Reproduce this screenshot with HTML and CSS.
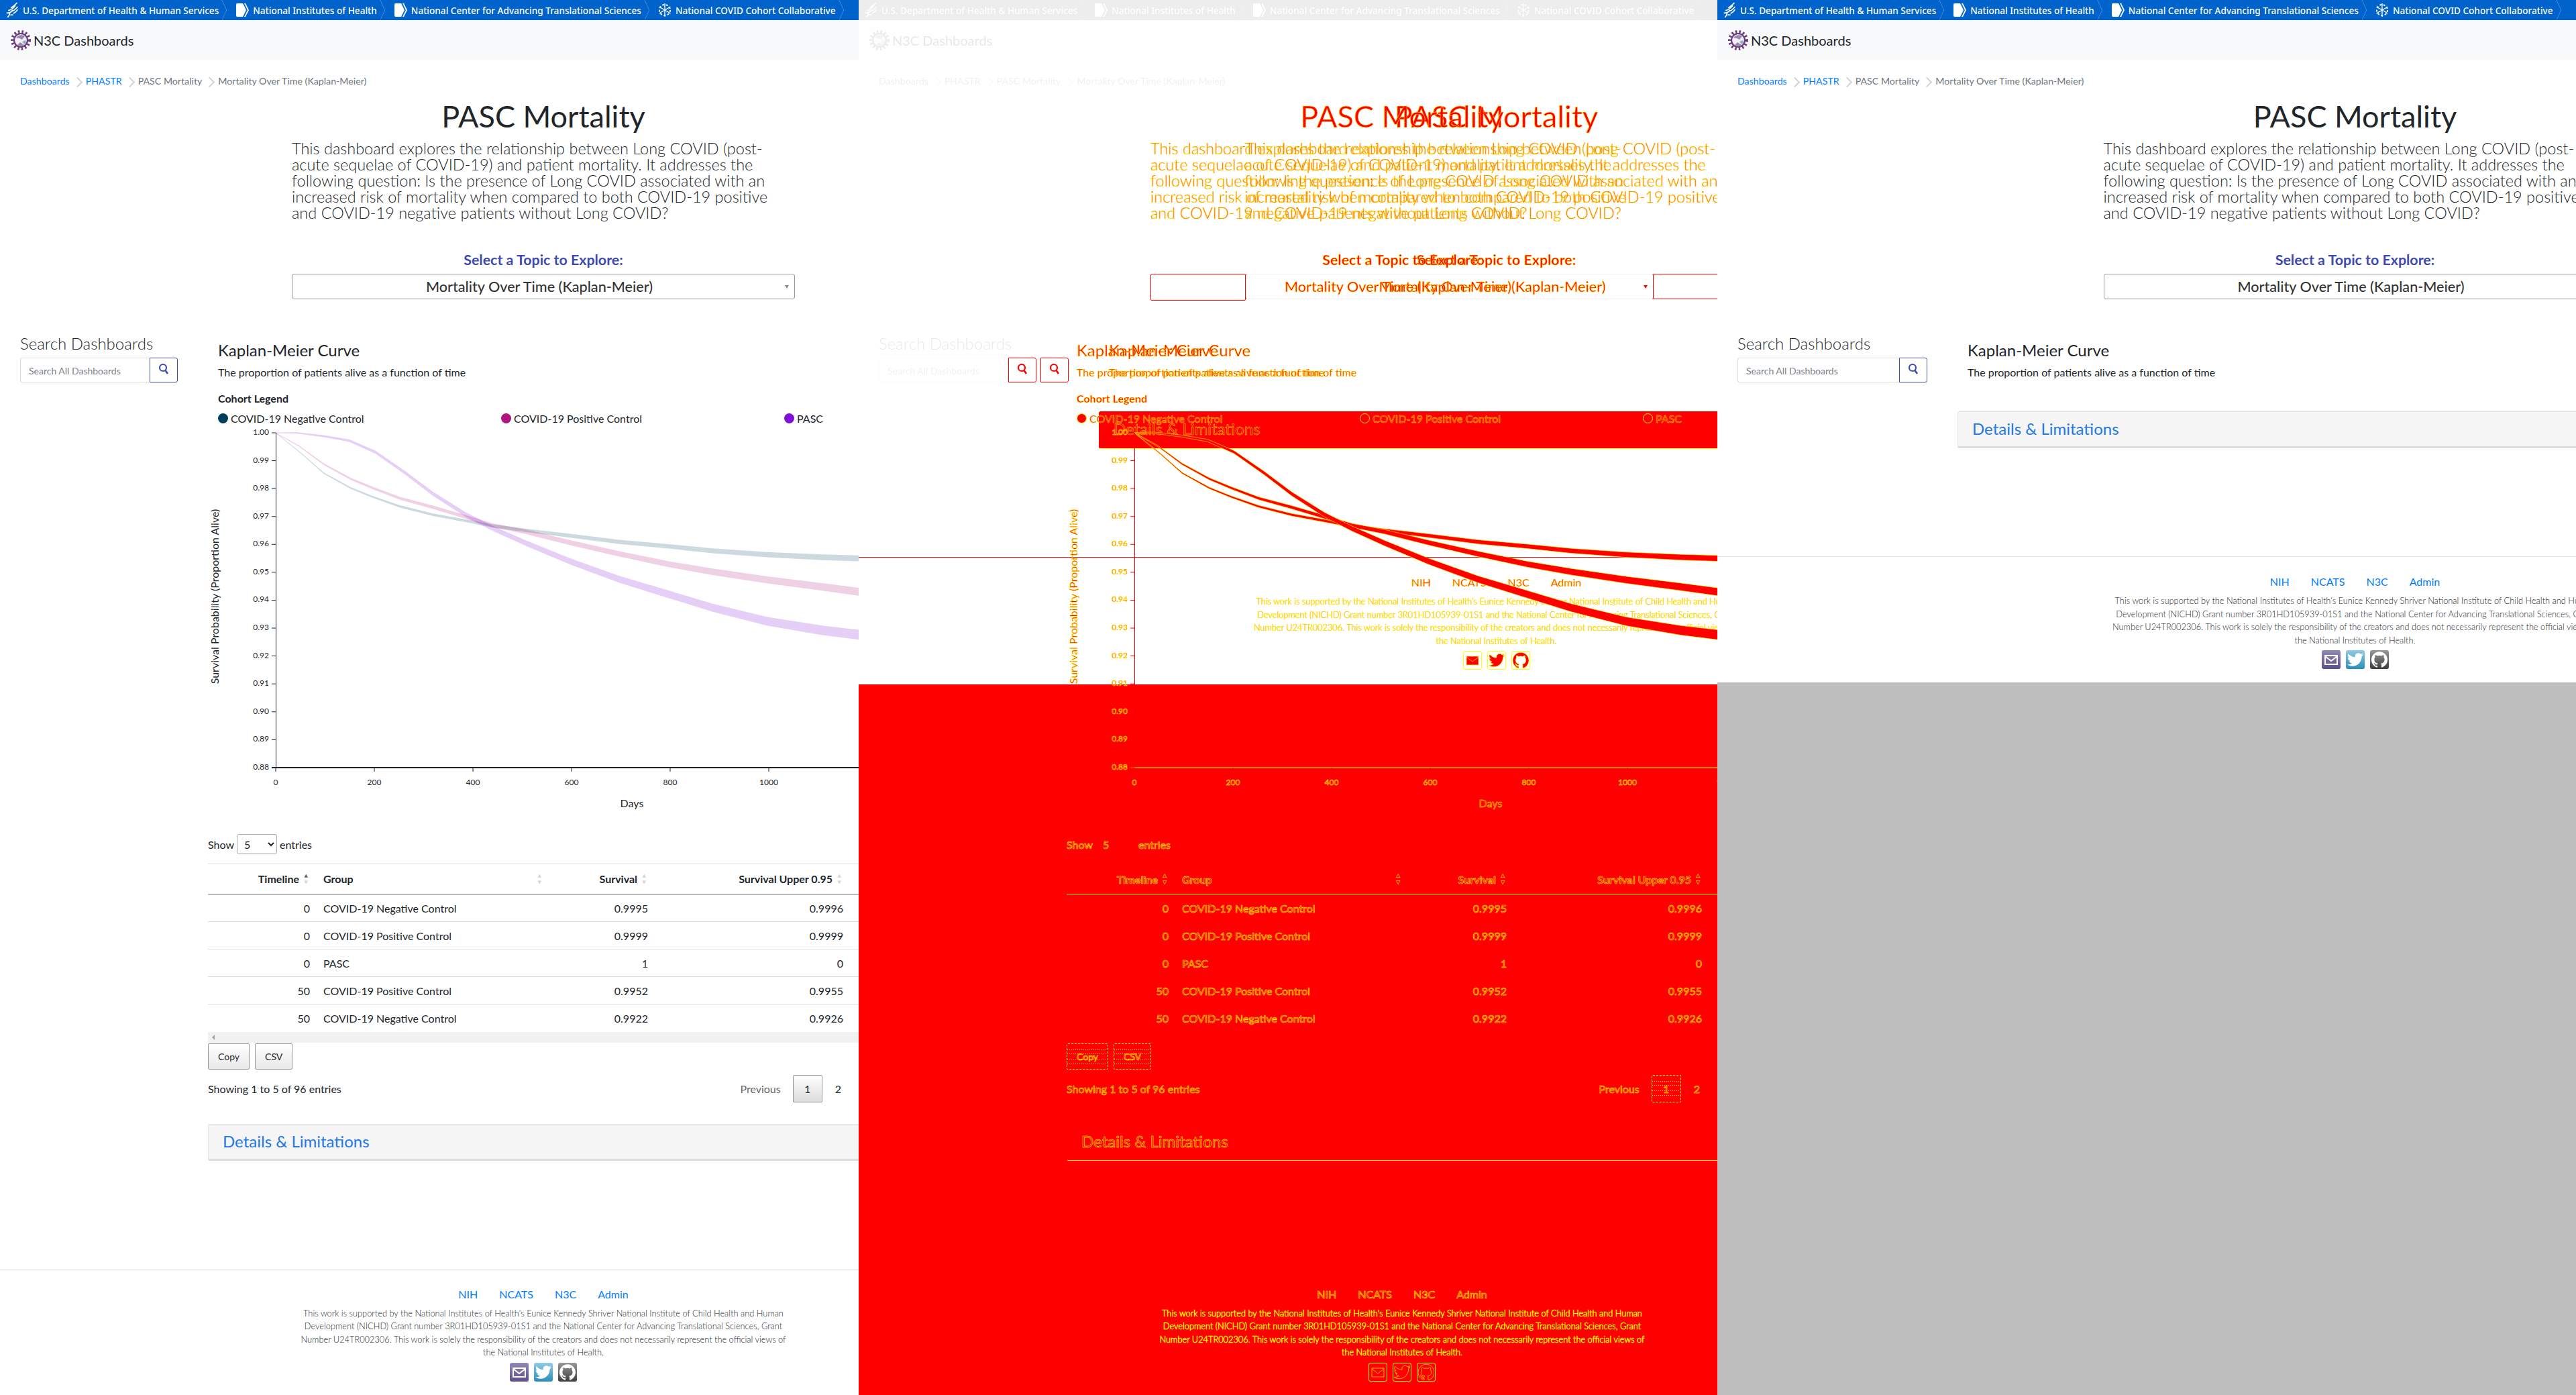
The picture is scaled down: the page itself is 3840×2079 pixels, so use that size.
FILE: index.html
```html
<!DOCTYPE html>
<html lang="en">
<head>
    <meta charset="UTF-8">
    <meta name="viewport" content="width=device-width, initial-scale=1.0">
    <title>N3C Dashboards - PASC Mortality</title>
    <link rel="stylesheet" href="styles.css">
</head>
<body>
    <div class="panel" id="expected"></div>
    <div class="panel panel-diff" id="diff"></div>
    <div class="panel" id="actual"></div>

    <template id="pageTemplate">
        <div class="page">
            <div class="topbar">
                <a class="topbar-item">
                    <svg class="topbar-icon" viewBox="0 0 24 28"><path d="M4 27c3-3 4-5 4-8M2 19c4 1 8-1 11-5M5 15c5-1 9-4 13-9M10 10c4-2 7-5 11-9M12 16c3-1 6-3 10-8M14 20c3-1 5-3 8-7M9 22c1 1 3 1 5 0" fill="none" stroke="#fff" stroke-width="2"/></svg>
                    U.S. Department of Health &amp; Human Services
                </a>
                <a class="topbar-item">
                    <svg class="topbar-icon" viewBox="0 0 20 28"><path d="M1 6a2 2 0 0 1 2-2h8l5 10-5 10H3a2 2 0 0 1-2-2z" fill="#fff"/><path d="M13 4l5 10-5 10h2l5-10-5-10z" fill="#fff"/></svg>
                    National Institutes of Health
                </a>
                <a class="topbar-item">
                    <svg class="topbar-icon" viewBox="0 0 20 28"><path d="M1 6a2 2 0 0 1 2-2h8l5 10-5 10H3a2 2 0 0 1-2-2z" fill="#fff"/><path d="M13 4l5 10-5 10h2l5-10-5-10z" fill="#fff"/></svg>
                    National Center for Advancing Translational Sciences
                </a>
                <a class="topbar-item">
                    <svg class="topbar-icon" viewBox="0 0 20 28"><g fill="none" stroke="#fff" stroke-width="2"><circle cx="10" cy="14" r="8" stroke-dasharray="3 2.6"/><path d="M10 4v20M1.5 9l17 10M18.500 9l-17 10" stroke-width="1.300"/></g></svg>
                    National COVID Cohort Collaborative
                </a>
            </div>

            <nav class="navbar">
                <svg class="brand-logo" viewBox="0 0 30 30">
                    <circle cx="15" cy="15" r="12.500" fill="none" stroke="#6a3d7c" stroke-width="5" stroke-dasharray="2.400 3.050"/>
                    <circle cx="15" cy="15" r="10" fill="#f3eef5" stroke="#6a3d7c" stroke-width="2.200"/>
                    <path d="M8 11c3-4 9-5 13-2l-4 5-4-2zM10 22l4-4 6 4c-3 2-7 2-10 0z" fill="#9b86ad"/>
                    <path d="M17 17l5-2 1 4-3 2z" fill="#8fb4bd"/>
                </svg>
                <span class="brand-text">N3C Dashboards</span>
            </nav>

            <div class="crumbs">
                <a class="crumb crumb-link">Dashboards</a>
                <a class="crumb crumb-link">PHASTR</a>
                <span class="crumb">PASC Mortality</span>
                <span class="crumb">Mortality Over Time (Kaplan-Meier)</span>
            </div>

            <section class="hero">
                <h1>PASC Mortality</h1>
                <p>This dashboard explores the relationship between Long COVID (post-acute sequelae of COVID-19) and patient mortality. It addresses the following question: Is the presence of Long COVID associated with an increased risk of mortality when compared to both COVID-19 positive and COVID-19 negative patients without Long COVID?</p>
                <h2 class="topic-label">Select a Topic to Explore:</h2>
                <div class="topic-select">Mortality Over Time (Kaplan-Meier)<span class="topic-arrow"></span></div>
            </section>

            <div class="content-row">
                <aside class="sidebar">
                    <div class="sidebar-title">Search Dashboards</div>
                    <div class="search">
                        <div class="search-input">Search All Dashboards</div>
                        <button class="search-btn">
                            <svg viewBox="0 0 16 18" width="16" height="18"><circle cx="7" cy="7" r="5" fill="none" stroke="currentColor" stroke-width="2.200"/><path d="M10.500 11l3.500 5" stroke="currentColor" stroke-width="2.600"/></svg>
                        </button>
                    </div>
                </aside>

                <main class="main">
                    <div class="intro">
                        <h3>Kaplan-Meier Curve</h3>
                        <p>The proportion of patients alive as a function of time</p>
                    </div>

                    <div class="results">
                        <div class="legend-title">Cohort Legend</div>
                        <div class="legend">
                            <div class="legend-item"><span class="dot dot-neg"></span>COVID-19 Negative Control</div>
                            <div class="legend-item"><span class="dot dot-pos"></span>COVID-19 Positive Control</div>
                            <div class="legend-item"><span class="dot dot-pasc"></span>PASC</div>
                        </div>
                        <div class="chart-slot"></div>

                        <div class="show-row">
                            Show
                            <select class="show-select"><option>5</option><option>10</option><option>25</option></select>
                            entries
                        </div>

                        <table class="data-table">
                            <thead>
                                <tr>
                                    <th class="col-time sorted">Timeline</th>
                                    <th class="col-group">Group</th>
                                    <th class="col-val">Survival</th>
                                    <th class="col-upper">Survival Upper 0.95</th>
                                    <th class="col-rest"></th>
                                </tr>
                            </thead>
                            <tbody>
                                <tr><td class="num">0</td><td>COVID-19 Negative Control</td><td class="num">0.9995</td><td class="num">0.9996</td><td></td></tr>
                                <tr><td class="num">0</td><td>COVID-19 Positive Control</td><td class="num">0.9999</td><td class="num">0.9999</td><td></td></tr>
                                <tr><td class="num">0</td><td>PASC</td><td class="num">1</td><td class="num">0</td><td></td></tr>
                                <tr><td class="num">50</td><td>COVID-19 Positive Control</td><td class="num">0.9952</td><td class="num">0.9955</td><td></td></tr>
                                <tr><td class="num">50</td><td>COVID-19 Negative Control</td><td class="num">0.9922</td><td class="num">0.9926</td><td></td></tr>
                            </tbody>
                        </table>
                        <div class="scroll-strip"><span class="scroll-arrow"></span></div>

                        <div class="export-row">
                            <button class="dt-btn">Copy</button>
                            <button class="dt-btn">CSV</button>
                        </div>

                        <div class="info-row">
                            <span>Showing 1 to 5 of 96 entries</span>
                            <div class="pager">
                                <span class="pager-prev">Previous</span>
                                <span class="pager-current">1</span>
                                <span class="pager-next">2</span>
                            </div>
                        </div>
                    </div>

                    <div class="accordion">Details &amp; Limitations</div>
                </main>
            </div>

            <footer class="footer">
                <div class="footer-links">
                    <a>NIH</a>
                    <a>NCATS</a>
                    <a>N3C</a>
                    <a>Admin</a>
                </div>
                <p>This work is supported by the National Institutes of Health's Eunice Kennedy Shriver National Institute of Child Health and Human Development (NICHD) Grant number 3R01HD105939-01S1 and the National Center for Advancing Translational Sciences, Grant Number U24TR002306. This work is solely the responsibility of the creators and does not necessarily represent the official views of the National Institutes of Health.</p>
                <div class="social">
                    <span class="social-icon social-mail"><svg viewBox="0 0 24 24"><path d="M3 6h18v13H3z" fill="none" stroke="#fff" stroke-width="2"/><path d="M3 7l9 7 9-7" fill="none" stroke="#fff" stroke-width="2"/></svg></span>
                    <span class="social-icon social-twitter"><svg viewBox="0 0 24 24"><path fill="#fff" d="M23.953 4.57a10 10 0 01-2.825.775 4.958 4.958 0 002.163-2.723c-.951.555-2.005.959-3.127 1.184a4.920 4.920 0 00-8.384 4.482C7.690 8.095 4.067 6.130 1.640 3.162a4.822 4.822 0 00-.666 2.475c0 1.710.870 3.213 2.188 4.096a4.904 4.904 0 01-2.228-.616v.060a4.923 4.923 0 003.946 4.827 4.996 4.996 0 01-2.212.085 4.936 4.936 0 004.604 3.417 9.867 9.867 0 01-6.102 2.105c-.390 0-.779-.023-1.170-.067a13.995 13.995 0 007.557 2.209c9.053 0 13.998-7.496 13.998-13.985 0-.210 0-.420-.015-.630A9.935 9.935 0 0024 4.590z"/></svg></span>
                    <span class="social-icon social-github"><svg viewBox="0 0 24 24"><path fill="#fff" d="M12 .297c-6.630 0-12 5.373-12 12 0 5.303 3.438 9.800 8.205 11.385.600.113.820-.258.820-.577 0-.285-.010-1.040-.015-2.040-3.338.724-4.042-1.610-4.042-1.610C4.422 18.070 3.633 17.700 3.633 17.700c-1.087-.744.084-.729.084-.729 1.205.084 1.838 1.236 1.838 1.236 1.070 1.835 2.809 1.305 3.495.998.108-.776.417-1.305.760-1.605-2.665-.300-5.466-1.332-5.466-5.930 0-1.310.465-2.380 1.235-3.220-.135-.303-.540-1.523.105-3.176 0 0 1.005-.322 3.300 1.230.960-.267 1.980-.399 3-.405 1.020.006 2.040.138 3 .405 2.280-1.552 3.285-1.230 3.285-1.230.645 1.653.240 2.873.120 3.176.765.840 1.230 1.910 1.230 3.220 0 4.610-2.805 5.625-5.475 5.920.420.360.810 1.096.810 2.220 0 1.606-.015 2.896-.015 3.286 0 .315.210.690.825.570C20.565 22.092 24 17.592 24 12.297c0-6.627-5.373-12-12-12"/></svg></span>
                </div>
            </footer>
        </div>
    </template>

    <script src="script.js"></script>
</body>
</html>
```

FILE: styles.css
```css
* {
    box-sizing: border-box;
}
body {
    margin: 0;
    width: 3840px;
    height: 2079px;
    display: flex;
    overflow: hidden;
    background-color: #bebebe;
    font-family: "Lato", "Liberation Sans", sans-serif;
    color: #212529;
}
.panel {
    position: relative;
    flex: none;
    width: 1280px;
    height: 2079px;
    overflow: hidden;
    background-color: #bebebe;
}
.page {
    background-color: #ffffff;
}
.page-a {
    width: 1620px;
}
.page-b {
    width: 1901px;
}
.page-b .results {
    display: none;
}

/* top government strip */
.topbar {
    display: flex;
    align-items: center;
    height: 30px;
    padding-left: 8px;
    background-color: #0063cc;
    font-family: "Noto Sans", sans-serif;
    font-weight: 500;
    font-size: 13.600px;
    color: #ffffff;
}
.topbar-item {
    position: relative;
    display: flex;
    align-items: center;
    gap: 6px;
    height: 30px;
    margin-right: 25px;
    white-space: nowrap;
}
.topbar-item::after {
    content: "";
    position: absolute;
    top: 4px;
    right: -16px;
    width: 21px;
    height: 21px;
    border-top: 1px solid #5b9be6;
    border-right: 1px solid #5b9be6;
    transform: scaleX(.45) rotate(45deg);
}
.topbar-icon {
    flex: none;
    width: 20px;
    height: 28px;
}
.navbar {
    display: flex;
    align-items: center;
    gap: 4px;
    height: 59px;
    padding-left: 16px;
    background-color: #f8f9fa;
}
.brand-logo {
    width: 30px;
    height: 30px;
}
.brand-text {
    font-size: 20px;
}
.crumbs {
    display: flex;
    align-items: center;
    height: 20px;
    margin-top: 21px;
    padding-left: 30px;
    font-size: 14.200px;
    color: #6c757d;
}
.crumb-link {
    color: #007bff;
}
.crumb + .crumb {
    position: relative;
    margin-left: 24px;
}
.crumb + .crumb::before {
    content: "";
    position: absolute;
    left: -18px;
    top: 5px;
    width: 9px;
    height: 9px;
    border-top: 2px solid #d4d4d4;
    border-right: 2px solid #d4d4d4;
    transform: rotate(45deg);
}

/* title and topic chooser */
.hero {
    width: 750px;
    margin: 19px auto 0;
}
.hero h1 {
    margin: 0;
    font-size: 45px;
    font-weight: 400;
    line-height: 48px;
    text-align: center;
}
.hero p {
    margin: 12px 0 0;
    font-size: 23.500px;
    font-weight: 300;
    line-height: 24px;
}
.topic-label {
    margin: 47px 0 0;
    font-size: 21.400px;
    font-weight: 700;
    line-height: 22px;
    text-align: center;
    color: #3f4ab0;
}
.topic-select {
    position: relative;
    height: 38px;
    margin-top: 10px;
    padding-right: 12px;
    border: 1px solid #999999;
    border-radius: 3px;
    font-size: 21.600px;
    font-weight: 500;
    line-height: 36px;
    text-align: center;
    color: #333333;
}
.topic-arrow {
    position: absolute;
    top: 16px;
    right: 8px;
    border-top: 5px solid #888888;
    border-left: 3px solid transparent;
    border-right: 3px solid transparent;
}

.content-row {
    display: flex;
    margin-top: 53px;
}
.sidebar {
    flex: none;
    padding: 0 45px 0 30px;
}
.page-a .sidebar {
    width: 310px;
}
.page-b .sidebar {
    width: 358px;
}
.sidebar-title {
    height: 26px;
    margin-bottom: 8px;
    font-size: 24px;
    font-weight: 300;
    line-height: 26px;
}
.search {
    display: flex;
    height: 37px;
}
.search-input {
    flex: 1;
    padding-left: 12px;
    border: 1px solid #dddddd;
    border-right: none;
    border-radius: 3px 0 0 3px;
    font-size: 14px;
    line-height: 37px;
    color: #7b8288;
}
.search-btn {
    width: 42px;
    padding: 0;
    border: 1px solid #3f4ab0;
    border-radius: 0 3px 3px 0;
    background-color: #ffffff;
    color: #3f4ab0;
}

.main {
    flex: 1;
    min-width: 0;
}
.intro {
    padding: 10px 15px 0;
}
.intro h3 {
    margin: 0;
    font-size: 24px;
    font-weight: 400;
    line-height: 26px;
}
.intro p {
    margin: 10px 0 0;
    font-size: 16px;
    line-height: 20px;
}
.results {
    margin-top: 19px;
    font-size: 16px;
}
.legend-title {
    padding-left: 15px;
    font-weight: 700;
    line-height: 20px;
}
.legend {
    display: grid;
    grid-template-columns: repeat(3, 422px);
    align-items: start;
    height: 21px;
    margin-top: 9px;
    padding-left: 15px;
}
.legend-item {
    display: flex;
    align-items: center;
    gap: 4px;
    height: 20px;
    white-space: nowrap;
}
.dot {
    width: 15px;
    height: 15px;
    border-radius: 50%;
}
.dot-neg {
    background-color: #003f5c;
}
.dot-pos {
    background-color: #b0157f;
}
.dot-pasc {
    background-color: #8010d8;
}
.chart {
    display: block;
    width: 1310px;
    height: 590px;
}
.axis-line {
    stroke: #212529;
    stroke-width: 1;
}
.axis-base {
    stroke: #212529;
    stroke-width: 2;
}
.chart text {
    font-family: "Lato", sans-serif;
    font-size: 12px;
    fill: #212529;
}
.chart .axis-label {
    font-size: 16px;
}
.band {
    fill-opacity: .2;
}
.band-neg {
    fill: #003f5c;
}
.band-pos {
    fill: #b0157f;
}
.band-pasc {
    fill: #8010d8;
}

/* datatable */
.show-row {
    display: flex;
    align-items: center;
    gap: 4px;
    height: 30px;
    margin-top: 19px;
}
.show-select {
    width: 60px;
    height: 30px;
    padding-left: 6px;
    border: 1px solid #aaaaaa;
    border-radius: 3px;
    background-color: #ffffff;
    font-family: inherit;
    font-size: 16px;
    color: #212529;
}
.data-table {
    width: 1157px;
    margin-top: 14px;
    border-collapse: collapse;
    table-layout: fixed;
}
.data-table th {
    position: relative;
    height: 45px;
    padding: 0 26px 0 10px;
    border-top: 1px solid #dddddd;
    border-bottom: 2px solid #bbbbbb;
    font-weight: 700;
    text-align: right;
}
.data-table th::before,
.data-table th::after {
    position: absolute;
    right: 13px;
    font-family: "DejaVu Sans", sans-serif;
    font-size: 7px;
    font-weight: 400;
    line-height: 8px;
    color: #d5d5d5;
}
.data-table th::before {
    content: "\25B2";
    top: 13px;
}
.data-table th::after {
    content: "\25BC";
    top: 23px;
}
.data-table th.sorted::before {
    color: #666666;
}
.data-table th.col-rest::before,
.data-table th.col-rest::after {
    content: none;
}
.data-table .col-time {
    width: 162px;
}
.data-table .col-group {
    width: 348px;
    text-align: left;
}
.data-table .col-val {
    width: 156px;
}
.data-table .col-upper {
    width: 291px;
}
.data-table td {
    height: 41px;
    padding: 0 10px;
    border-top: 1px solid #dddddd;
}
.data-table .num {
    text-align: right;
}
.scroll-strip {
    display: flex;
    align-items: center;
    height: 16px;
    padding-left: 6px;
    background-color: #f1f1f1;
}
.scroll-arrow {
    border-right: 4px solid #a3a3a3;
    border-top: 4px solid transparent;
    border-bottom: 4px solid transparent;
}
.export-row {
    display: flex;
    gap: 8px;
    margin-top: 1px;
}
.dt-btn {
    height: 39px;
    padding: 0 14px;
    border: 1px solid #999999;
    border-radius: 2px;
    background: linear-gradient(#ffffff, #e9e9e9);
    font-family: inherit;
    font-size: 14px;
    color: #212529;
}
.info-row {
    display: flex;
    align-items: center;
    justify-content: space-between;
    width: 957px;
    height: 41px;
    margin-top: 8px;
}
.pager {
    display: flex;
    align-items: center;
}
.pager-prev {
    margin-right: 18px;
    color: #666666;
}
.pager-current {
    width: 44px;
    height: 41px;
    margin-right: 19px;
    border: 1px solid #979797;
    border-radius: 2px;
    background: linear-gradient(#ffffff, #dcdcdc);
    line-height: 39px;
    text-align: center;
}
.pager-next {
    margin-right: 13px;
}
.accordion {
    height: 55px;
    padding-left: 21px;
    border: 1px solid #e3e3e3;
    border-bottom: 3px solid #dddddd;
    border-radius: 3px;
    background-color: #f5f5f5;
    font-size: 24px;
    line-height: 50px;
    color: #2278e8;
}
.page-a .accordion {
    margin-top: 32px;
}
.page-b .accordion {
    margin-top: 48px;
}

.footer {
    margin-top: 161px;
    padding: 27px 0 20px;
    border-top: 1px solid #e5e5e5;
    text-align: center;
}
.footer-links {
    display: flex;
    justify-content: center;
    gap: 32px;
    height: 20px;
    font-size: 16px;
    line-height: 20px;
    color: #007bff;
}
.footer p {
    width: 730px;
    margin: 9px auto 5px;
    font-size: 12.800px;
    font-weight: 300;
    line-height: 19.600px;
}
.social {
    display: flex;
    justify-content: center;
    gap: 8px;
}
.social-icon {
    display: block;
    width: 28px;
    height: 28px;
    padding: 2px;
    border-radius: 3px;
}
.social-icon svg {
    display: block;
    width: 24px;
    height: 24px;
}
.social-mail {
    background: linear-gradient(#9187b5, #5c4f8a);
}
.social-twitter {
    background: linear-gradient(#8fcbe6, #2a8fbb);
}
.social-github {
    background: linear-gradient(#999999, #3d3d3d);
}

/* middle panel: comparison of the two pages */
.panel-diff {
    background-color: #ffffff;
}
.panel-diff .page {
    position: absolute;
    top: 0;
    left: 0;
    background-color: transparent;
}
.diff-fill {
    position: absolute;
    top: 1020px;
    left: 0;
    right: 0;
    bottom: 0;
    background-color: #ff0000;
}
.panel-diff .topbar,
.panel-diff .navbar,
.panel-diff .crumbs,
.panel-diff .sidebar-title,
.panel-diff .search-input {
    filter: grayscale(1);
    opacity: .1;
}
.panel-diff .page-b .topbar,
.panel-diff .page-b .navbar,
.panel-diff .page-b .crumbs,
.panel-diff .page-b .sidebar-title,
.panel-diff .page-b .search-input {
    visibility: hidden;
}
.panel-diff .hero *,
.panel-diff .main *,
.panel-diff .footer * {
    color: #ff0000;
    -webkit-text-stroke: .45px #ffff00;
    background: none;
    border-color: transparent;
}
.panel-diff .page-a .show-row,
.panel-diff .page-a .show-row *,
.panel-diff .page-a .data-table *,
.panel-diff .page-a .export-row *,
.panel-diff .page-a .info-row *,
.panel-diff .page-a .accordion,
.panel-diff .page-a .footer * {
    -webkit-text-stroke: .6px #ffff00;
}
.panel-diff .footer {
    border-top-color: transparent;
}
.panel-diff .page-b .footer {
    border-top-color: #ff0000;
}
.panel-diff .search-btn {
    background-color: transparent;
    border-color: #ff0000;
    color: #ff0000;
}
.panel-diff .page-a .topic-select {
    border-color: #f2f2f2;
    border-right-color: #ff0000;
}
.panel-diff .page-a .topic-select::before {
    content: "";
    position: absolute;
    top: -1px;
    left: -1px;
    width: 140px;
    height: 38px;
    border: 1px solid #ff0000;
    border-radius: 2px;
}
.panel-diff .page-b .topic-select {
    border-color: #ff0000;
}
.panel-diff .topic-arrow {
    border-top-color: #ff0000;
    border-left-color: transparent;
    border-right-color: transparent;
}
.panel-diff .dot {
    background-color: #ff0000;
    border: 1px solid #ffff00;
}
.panel-diff .band {
    fill: #ff0000;
    fill-opacity: 1;
    stroke: #ffff00;
    stroke-width: .6;
}
.panel-diff .axis-line {
    stroke: #ff0000;
}
.panel-diff .axis-base {
    stroke: #ffff00;
    stroke-width: 1;
}
.panel-diff .chart text {
    fill: #ff0000;
    stroke: #ffff00;
    stroke-width: .5;
}
.panel-diff .data-table th {
    border-top-color: transparent;
    border-bottom: 1px solid #ffff00;
}
.panel-diff .data-table th::before,
.panel-diff .data-table th::after {
    color: #ff0000;
    -webkit-text-stroke: .5px #ffff00;
}
.panel-diff .data-table td {
    border-top-color: transparent;
}
.panel-diff .scroll-arrow {
    border-right-color: transparent;
}
.panel-diff .dt-btn,
.panel-diff .pager-current {
    border: 1px dashed #ffff00;
    background:
        repeating-linear-gradient(90deg, #ffff00 0 1px, transparent 1px 3px) 0 8px / 100% 1px no-repeat,
        repeating-linear-gradient(90deg, #ffff00 0 1px, transparent 1px 3px) 0 14px / 100% 1px no-repeat,
        repeating-linear-gradient(90deg, #ffff00 0 1px, transparent 1px 3px) 0 22px / 100% 1px no-repeat,
        repeating-linear-gradient(90deg, #ffff00 0 1px, transparent 1px 3px) 0 29px / 100% 1px no-repeat;
}
.panel-diff .page-b .accordion {
    background-color: #ff0000;
    border-bottom: 1px solid #ffff00;
    height: 56px;
}
.panel-diff .page-a .accordion {
    border-bottom: 1px solid #ffff00;
}
.panel-diff .social-icon {
    background: none;
    outline: 1px solid #ffff00;
    outline-offset: -1px;
}
.panel-diff .social-icon path {
    fill: #ff0000;
    stroke: #ffff00;
    stroke-width: .7;
}
```

FILE: script.js
```js
// Survival curves, [days, survival]. Upper and lower bounds widen with time.
var curves = [
    { name: 'neg', spread: 4, points: [[0, 1], [52, .9926], [97, .9856], [152, .9802], [197, .977], [252, .9736], [319, .9706], [397, .9681], [441, .9666], [508, .965], [597, .9631], [697, .9609], [797, .9593], [886, .9577], [997, .9563], [1108, .9554], [1183, .955]] },
    { name: 'pos', spread: 5.5, points: [[0, 1], [47, .9953], [97, .9888], [152, .9835], [197, .9802], [252, .9765], [319, .9733], [386, .9698], [441, .9668], [508, .9645], [597, .9606], [697, .9566], [797, .9529], [886, .9502], [997, .9473], [1108, .9448], [1183, .943]] },
    { name: 'pasc', spread: 7, points: [[0, 1], [41, 1], [97, .9988], [149, .9972], [202, .9931], [263, .9856], [319, .9781], [386, .9706], [441, .9657], [508, .9604], [597, .9539], [697, .9475], [797, .9421], [886, .9373], [997, .9324], [1108, .9292], [1183, .9276]] }
];
var xPos = function (d) { return 101 + d * 0.735; };
var yPos = function (s) { return 11 + (1 - s) * 4158; };

function chartMarkup() {
    var html = '<svg class="chart" viewBox="0 0 1310 590">';
    curves.forEach(function (curve) {
        var top = [], bottom = [];
        curve.points.forEach(function (p) {
            var half = curve.spread * Math.pow(p[0] / 1183, 0.75) + 0.4;
            top.push(xPos(p[0]).toFixed(1) + ',' + (yPos(p[1]) - half).toFixed(1));
            bottom.unshift(xPos(p[0]).toFixed(1) + ',' + (yPos(p[1]) + half).toFixed(1));
        });
        html += '<polygon class="band band-' + curve.name + '" points="' + top.concat(bottom).join(' ') + '"/>';
    });
    html += '<line class="axis-line" x1="101.5" y1="11" x2="101.5" y2="510"/>';
    html += '<line class="axis-base" x1="95" y1="510" x2="1310" y2="510"/>';
    for (var i = 0; i <= 12; i++) {
        var value = 1 - i / 100, y = yPos(value);
        html += '<line class="axis-line" x1="95" y1="' + y + '" x2="101" y2="' + y + '"/>';
        html += '<text x="91" y="' + (y + 3) + '" text-anchor="end">' + value.toFixed(2) + '</text>';
    }
    for (var d = 0; d <= 1200; d += 200) {
        html += '<line class="axis-line" x1="' + xPos(d) + '" y1="510" x2="' + xPos(d) + '" y2="516"/>';
        html += '<text x="' + xPos(d) + '" y="536" text-anchor="middle">' + d + '</text>';
    }
    html += '<text class="axis-label" x="632" y="569" text-anchor="middle">Days</text>';
    html += '<text class="axis-label" transform="translate(16 255) rotate(-90)" text-anchor="middle">Survival Probability (Proportion Alive)</text>';
    return html + '</svg>';
}

function addPage(panel, kind) {
    var page = document.getElementById('pageTemplate').content.cloneNode(true);
    page.querySelector('.page').classList.add('page-' + kind);
    page.querySelector('.chart-slot').innerHTML = chartMarkup();
    panel.appendChild(page);
}

addPage(document.getElementById('expected'), 'a');
addPage(document.getElementById('actual'), 'b');

var diff = document.getElementById('diff');
addPage(diff, 'b');
var fill = document.createElement('div');
fill.className = 'diff-fill';
diff.appendChild(fill);
addPage(diff, 'a');
```
